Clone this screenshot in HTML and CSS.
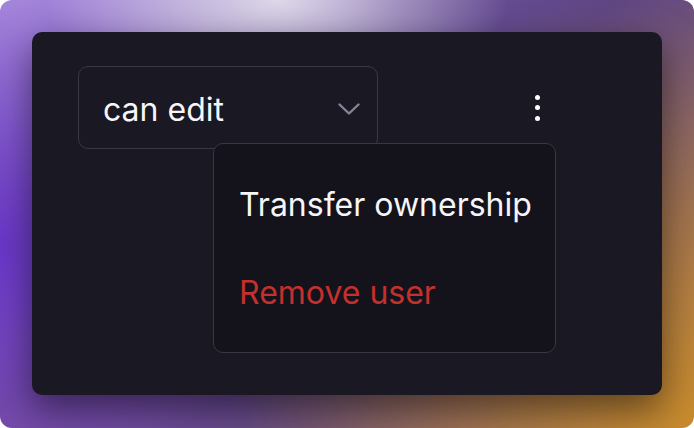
FILE: index.html
```html
<!DOCTYPE html>
<html lang="en">
<head>
<meta charset="utf-8">
<title>Member permissions</title>
<link rel="stylesheet" href="styles.css">
</head>
<body>
<div class="stage">
  <div class="card">
    <div class="row">
      <div class="select">
        <span class="select-value">can edit</span>
        <svg class="chevron" width="22" height="12" viewBox="0 0 22 12" aria-hidden="true">
          <path d="M1.5 1.5 L11 10.5 L20.5 1.5" fill="none" stroke="#86849a" stroke-width="2.4" stroke-linecap="round" stroke-linejoin="round"/>
        </svg>
      </div>
      <div class="kebab-wrap">
        <button class="kebab" aria-label="More options">
          <span class="dot"></span><span class="dot"></span><span class="dot"></span>
        </button>
        <div class="menu">
          <div class="menu-item">Transfer ownership</div>
          <div class="menu-item danger">Remove user</div>
        </div>
      </div>
    </div>
  </div>
</div>
</body>
</html>
```

FILE: styles.css
```css
* { box-sizing: border-box; }

html, body {
  margin: 0;
  padding: 0;
  background: #ffffff;
}

body {
  font-family: Inter, "Noto Sans", "Liberation Sans", sans-serif;
}

.stage {
  width: 694px;
  height: 428px;
  border-radius: 12px;
  overflow: hidden;
  padding: 32px 32px 33px 32px;
  background:
    radial-gradient(ellipse 230px 120px at 40% 0%, rgba(226,222,236,0.95) 0%, rgba(226,222,236,0) 100%),
    radial-gradient(circle at 0% 58%, #6a36c8 0%, rgba(106,54,200,0) 42%),
    radial-gradient(circle at 100% 100%, #c98b2c 0%, rgba(201,139,44,0) 55%),
    radial-gradient(circle at 0% 0%, #b39ae0 0%, rgba(179,154,224,0) 48%),
    radial-gradient(circle at 0% 100%, #7d5a92 0%, rgba(125,90,146,0) 40%),
    linear-gradient(135deg, #9070c4 0%, #5c4486 55%, #8a6a6a 100%);
}

.card {
  width: 630px;
  height: 363px;
  background: #191823;
  border-radius: 10px;
  box-shadow: 0 14px 36px rgba(0, 0, 0, 0.5);
  padding: 34px 46px;
}

.row {
  display: flex;
  align-items: center;
  gap: 140px;
}

.select {
  width: 300px;
  height: 83px;
  border: 1px solid #393846;
  border-radius: 10px;
  padding: 19px 17px 14px 24px;
  display: flex;
  align-items: center;
  justify-content: space-between;
}

.select-value {
  color: #f6f6f8;
  font-size: 32px;
  line-height: 48px;
}

.chevron {
  display: block;
  margin-top: -2px;
}

.kebab-wrap {
  position: relative;
}

.kebab {
  width: 38px;
  height: 38px;
  border: 0;
  padding: 0;
  background: transparent;
  display: flex;
  flex-direction: column;
  align-items: center;
  justify-content: center;
  gap: 5.5px;
  cursor: pointer;
}

.dot {
  width: 5px;
  height: 5px;
  border-radius: 50%;
  background: #ffffff;
}

.menu {
  position: absolute;
  right: 0;
  top: 54px;
  width: 343px;
  background: #14131c;
  border: 1px solid #383743;
  border-radius: 10px;
  padding: 17px 0 15px;
  display: flex;
  flex-direction: column;
}

.menu-item {
  font-size: 32px;
  line-height: 48px;
  padding: 20px 25px;
  color: #f6f6f8;
  white-space: nowrap;
}

.menu-item.danger {
  color: #c4302c;
}
```
